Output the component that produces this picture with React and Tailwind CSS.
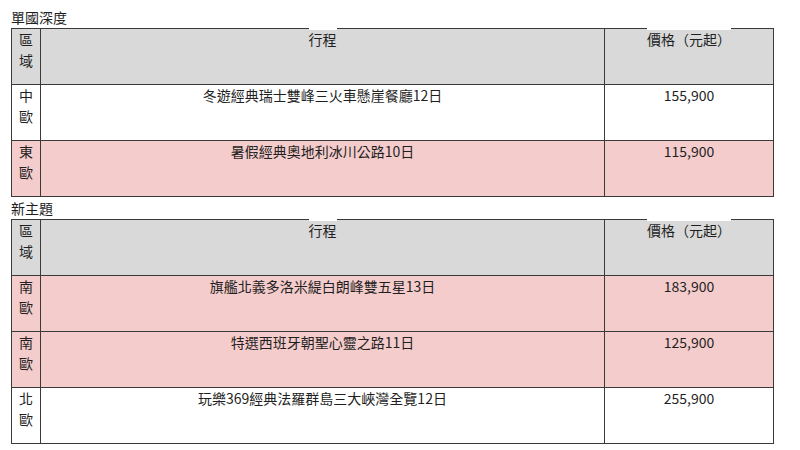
import React from "react";

const sections = [
  {
    title: "單國深度",
    rows: [
      { region: ["中", "歐"], name: "冬遊經典瑞士雙峰三火車懸崖餐廳12日", price: "155,900", pink: false },
      { region: ["東", "歐"], name: "暑假經典奧地利冰川公路10日", price: "115,900", pink: true },
    ],
  },
  {
    title: "新主題",
    rows: [
      { region: ["南", "歐"], name: "旗艦北義多洛米緹白朗峰雙五星13日", price: "183,900", pink: true },
      { region: ["南", "歐"], name: "特選西班牙朝聖心靈之路11日", price: "125,900", pink: true },
      { region: ["北", "歐"], name: "玩樂369經典法羅群島三大峽灣全覽12日", price: "255,900", pink: false },
    ],
  },
];

function HeadText({ children }) {
  return (
    <span className="relative inline-block align-top">
      <span className="absolute left-0 right-0 top-[-1px] h-[2px] bg-white" />
      {children}
    </span>
  );
}

function Table({ rows }) {
  const cell = "border border-[#3a3a3a] align-top pt-0 h-[56px] text-center";
  return (
    <table className="w-[762px] border-collapse table-fixed">
      <colgroup>
        <col className="w-[29px]" />
        <col className="w-[564px]" />
        <col className="w-[169px]" />
      </colgroup>
      <tbody>
        <tr className="bg-[#d9d9d9]">
          <td className={cell}>
            區<br />域
          </td>
          <td className={cell}>
            <HeadText>行程</HeadText>
          </td>
          <td className={cell}>
            <HeadText>價格（元起）</HeadText>
          </td>
        </tr>
        {rows.map((r, i) => (
          <tr key={i} className={r.pink ? "bg-[#f4cccc]" : "bg-white"}>
            <td className={cell}>
              {r.region[0]}
              <br />
              {r.region[1]}
            </td>
            <td className={cell}>{r.name}</td>
            <td className={cell}>{r.price}</td>
          </tr>
        ))}
      </tbody>
    </table>
  );
}

export default function App() {
  return (
    <div
      className="w-[800px] h-[450px] overflow-hidden bg-white text-[#1f1f1f] text-[14px] leading-[21px] pl-[11px] pt-[6px]"
      style={{ fontFamily: '"Noto Sans CJK TC", "Noto Sans", sans-serif' }}
    >
      {sections.map((s, i) => (
        <div key={i}>
          <div className="h-[22px] leading-[22px]">{s.title}</div>
          <Table rows={s.rows} />
        </div>
      ))}
      <div className="h-[22px] leading-[22px] pt-[2px]">注意事項</div>
    </div>
  );
}
